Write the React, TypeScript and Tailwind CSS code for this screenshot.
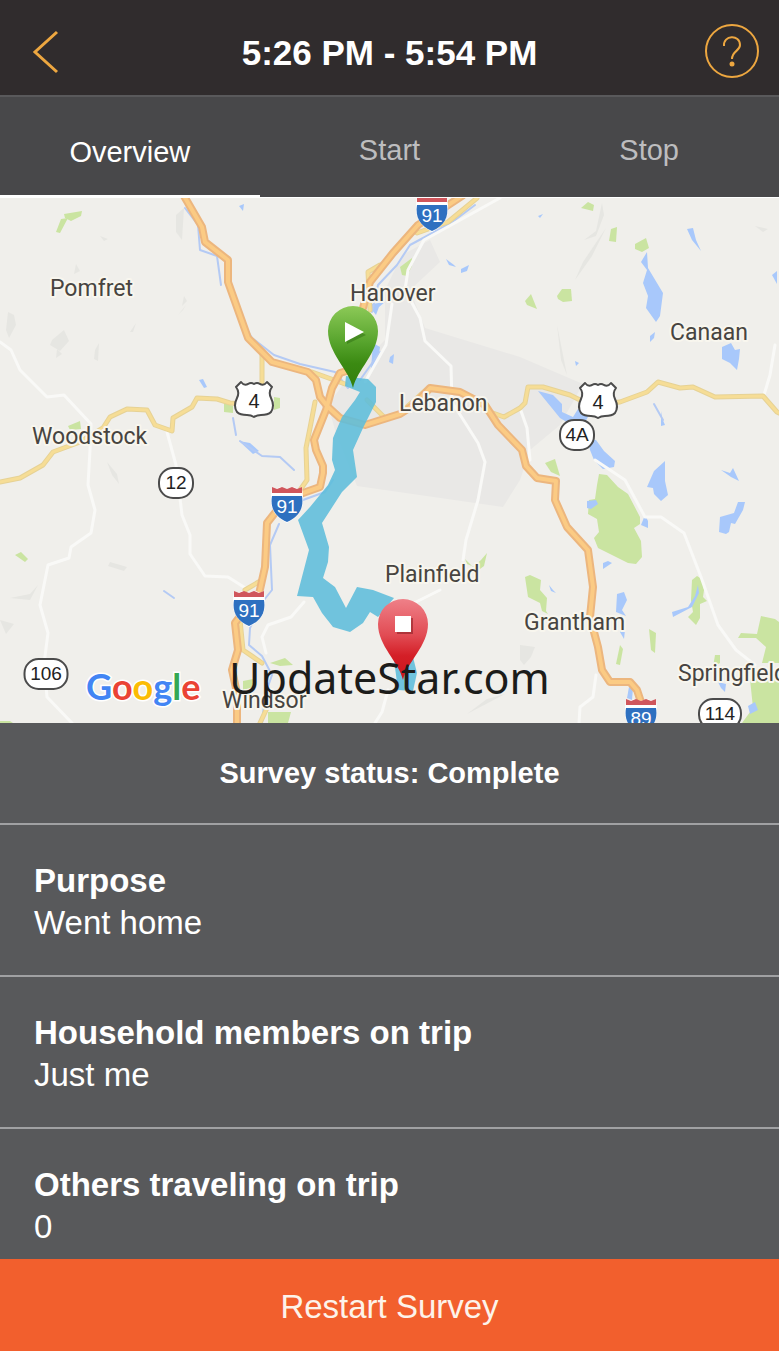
const tabs = ["Overview", "Start", "Stop"];

const answers = [
  { question: "Purpose", answer: "Went home" },
  { question: "Household members on trip", answer: "Just me" },
  { question: "Others traveling on trip", answer: "0" },
];

const parks = [
  "56,232 61,219 68,218 60,233",
  "64,214 82,211 81,216 71,221 65,218",
  "68,426 80,421 81,429 70,430",
  "15,555 21,552 28,559 25,562",
  "224,403 233,406 233,413 224,412",
  "400,267 412,258 412,266 407,276 402,275",
  "581,208 588,202 594,205 593,211",
  "611,229 617,227 616,242 609,241",
  "635,244 646,238 649,248 642,252 635,249",
  "557,296 562,289 571,289 572,301 563,302 558,299",
  "525,301 531,294 537,309 527,305",
  "545,463 555,459 560,476 551,472",
  "599,474 607,475 618,487 628,494 640,517 640,524 634,528 641,541 642,557 636,564 628,563 598,548 594,538 599,532 597,519 588,514 589,500 595,499 597,485",
  "525,577 530,575 541,580 540,590 547,598 546,611 548,614 542,611 540,603 528,597",
  "692,580 697,576 702,579 704,590 703,597 707,601 700,604 700,618 696,625 688,617 693,612 691,600",
  "649,629 656,633 655,653 651,650",
  "738,638 741,633 757,634 761,616 775,619 779,622 779,663 762,663 766,647 756,638",
  "750,679 779,670 779,723 742,723 753,708",
  "620,645 623,649 620,665 616,664",
  "715,655 720,655 720,663 713,667",
  "465,559 473,567 481,560 487,553 484,566 480,569 472,566 467,564",
  "270,663 285,658 293,665 280,666",
  "268,712 291,712 288,723 268,723",
  "0,721 10,721 13,723 0,723",
  "274,397 280,398 280,408 274,410",
  "243,681 253,679 253,687 243,690",
];

const lakes = [
  "647,252 648,268 663,293 660,316 656,322 646,308 648,296 643,283 647,270 641,262",
  "687,229 693,228 696,240 701,251 692,240",
  "650,336 655,332 654,338 650,342",
  "722,347 731,343 735,350 740,349 739,359 737,370 730,363 722,359",
  "772,275 777,271 777,284",
  "538,391 553,395 562,404 562,412 573,417 578,409 588,417 584,424 570,424 560,418",
  "588,439 596,440 604,451 615,461 614,467 603,469 594,460 590,450",
  "654,471 665,461 665,481 668,495 661,501 654,494 653,488 647,487",
  "721,470 730,473 733,468 739,481 731,477",
  "720,517 734,513 738,502 745,502 743,510 735,524 731,523 729,532 726,534 719,532",
  "641,525 645,515 648,521 648,528",
  "587,501 596,500 598,504 591,509 587,508",
  "617,594 624,592 627,600 622,610 626,616 616,612",
  "698,585 699,593 692,607 673,617 672,612 688,607 695,596",
  "621,625 625,630 624,639 620,632",
  "603,563 608,561 612,563 606,567 603,569",
  "549,585 553,590 556,593 551,591",
  "718,682 726,684 725,692 721,688",
  "748,706 755,702 758,710 750,714",
  "629,687 633,688 632,700 627,698",
  "446,259 454,265 456,267 449,265",
  "461,269 469,265 467,271 461,273",
  "390,357 394,354 393,364 389,362",
  "373,343 380,347 378,360 371,369",
  "372,304 385,302 379,307 376,315 372,310",
  "199,380 203,379 207,387 204,388",
  "239,441 250,443 259,451 253,454",
  "661,411 662,418 665,425 661,426",
  "575,361 579,363 576,366",
  "239,206 244,204 243,211",
  "538,216 543,214 540,218",
];

const terrain = [
  "176,215 184,208 182,240 176,232",
  "8,312 14,315 16,325 9,338 6,330",
  "52,340 64,330 69,341 60,351 50,345",
  "57,349 62,354 56,358",
  "130,332 136,323 133,332",
  "95,350 99,343 98,361 94,359",
  "602,203 604,215 596,236 584,240 596,231",
  "606,228 592,256 575,280 583,262",
  "557,325 561,345 567,375 561,360",
  "520,645 535,647 531,657 524,665 520,660",
  "107,462 117,474 119,484 112,475",
  "10,598 30,594 38,585 30,600",
  "755,226 768,229 763,232",
  "0,620 14,624 6,634",
  "110,562 127,567 124,571 108,566",
  "178,315 186,305 183,310",
  "467,714 487,699 505,694 486,704",
  "100,236 108,239 104,241",
  "76,264 80,271 74,274",
  "184,296 187,301 182,306",
];

const localRoads = [
  "M0,342 11,350 20,370 47,397 64,395 91,424 90,450 88,485 95,510 91,533 71,547 69,558 48,565 40,605 48,633 44,664 47,697 72,723",
  "M167,432 176,465 182,515 190,535 190,554 205,576 228,577 247,589",
  "M500,198 424,240 408,270 405,290 420,318 425,341 451,366 452,402 478,443 485,462 478,500 466,540 463,560",
  "M392,304 386,345 365,382",
  "M440,590 380,620",
  "M304,602 291,617 268,625 262,637 266,653",
  "M388,690 382,712 375,723",
  "M775,345 770,375 764,395",
  "M595,460 625,480 645,517 661,517 684,533 701,577 718,625 736,650 755,665",
  "M596,675 593,697 580,707 579,723",
  "M520,408 527,428 530,460",
];

const streams = [
  "M185,208 198,225 200,250 217,256 221,285",
  "M241,319 252,338 274,355 300,364 335,372 348,388",
  "M475,205 451,223 410,245 397,265 378,285 372,312",
  "M380,352 360,380",
  "M233,418 236,435",
  "M240,441 262,456 280,457 294,470",
  "M303,500 325,492 333,480",
  "M279,524 270,545 272,590 260,605 250,628 249,645 262,656 272,675 265,695 262,723",
  "M164,591 174,598",
  "M654,404 663,420",
];

const yellowRoads = [
  "M0,482 20,478 43,465 53,452 80,442 103,428 110,417 127,409 147,410 155,425 172,431 173,418 192,407 197,398 217,399 230,403 255,405 262,385 262,352",
  "M490,412 504,417 520,408 525,403 528,387 543,387 570,395 590,405 620,402 647,392 658,382 680,388 693,387 715,397 763,396 777,412 779,413",
  "M477,198 448,222 417,233",
  "M370,310 368,272 380,265",
  "M315,402 310,428 306,448 307,480 300,490",
  "M367,400 385,418",
  "M312,372 345,384",
  "M400,413 428,388",
  "M245,590 262,580",
  "M240,620 243,650 262,663",
  "M260,723 267,708",
];

const highways = [
  "M184,196 202,227 205,242 228,260 228,282 248,338 272,362 308,372 316,380 320,397 328,407 340,418 365,425 400,414 414,405 430,388 460,392 485,405 498,425 522,450 526,466 537,478 556,481 555,500 567,527 588,550 593,587 590,617 598,647 602,670 610,682 630,682 637,690 643,708",
  "M462,196 418,225 393,253 370,282 363,308",
  "M350,370 340,373 332,388 326,410 314,440 316,450 323,466 323,473 320,487 303,493 285,500 267,523 265,567 259,594 248,606 235,623 238,650 232,670 237,693 237,723",
];

const towns = [
  { name: "Pomfret", x: 50, y: 296 },
  { name: "Hanover", x: 350, y: 301 },
  { name: "Canaan", x: 670, y: 340 },
  { name: "Lebanon", x: 399, y: 411 },
  { name: "Woodstock", x: 32, y: 444 },
  { name: "Plainfield", x: 385, y: 582 },
  { name: "Grantham", x: 524, y: 630 },
  { name: "Springfield", x: 678, y: 681 },
  { name: "Windsor", x: 222, y: 708 },
];

const interstates = [
  { label: "91", x: 432, y: 205 },
  { label: "91", x: 287, y: 496 },
  { label: "91", x: 249, y: 600 },
  { label: "89", x: 641, y: 708 },
];

const usRoutes = [
  { label: "4", x: 254, y: 400 },
  { label: "4", x: 598, y: 401 },
];

const stateRoutes = [
  { label: "12", x: 176, y: 483, width: 34 },
  { label: "4A", x: 577, y: 435, width: 34 },
  { label: "106", x: 46, y: 674, width: 43 },
  { label: "114", x: 720, y: 714, width: 42 },
];

function TripMap() {
  return (
    <svg
      viewBox="0 198 779 525"
      role="img"
      aria-label="Trip route map"
      className="block w-full border-t border-white bg-[#f0efeb] font-['Roboto',sans-serif]"
    >
      <defs>
        <linearGradient id="startPin" x1="0" y1="0" x2="0" y2="1">
          <stop offset="0" stopColor="#8cc957" />
          <stop offset="0.45" stopColor="#56a32c" />
          <stop offset="0.7" stopColor="#3b8a12" />
          <stop offset="1" stopColor="#337f0c" />
        </linearGradient>
        <linearGradient id="stopPin" x1="0" y1="0" x2="0" y2="1">
          <stop offset="0" stopColor="#ef8088" />
          <stop offset="0.45" stopColor="#e14b53" />
          <stop offset="0.7" stopColor="#d41f27" />
          <stop offset="1" stopColor="#cb151c" />
        </linearGradient>
      </defs>

      <polygon
        points="425,328 520,357 583,384 560,425 530,450 520,480 503,507 357,486 335,430 328,405 350,375 385,340 385,290 402,255 430,240 440,262 410,290"
        fill="#e9e8e6"
      />
      {terrain.map((points) => <polygon key={points} points={points} fill="#e6e6e2" />)}
      {parks.map((points) => <polygon key={points} points={points} fill="#cae4a1" />)}
      {lakes.map((points) => <polygon key={points} points={points} fill="#a8c8fb" />)}

      <g fill="none" strokeLinejoin="round" strokeLinecap="round">
        {streams.map((d) => <path key={d} d={d} stroke="#b4caf4" strokeWidth="2" />)}
        {localRoads.map((d) => <path key={d} d={d} stroke="#f9f9f7" strokeWidth="3" />)}
        {yellowRoads.map((d) => <path key={d} d={d} stroke="#e6d295" strokeWidth="5" />)}
        {yellowRoads.map((d) => <path key={d} d={d} stroke="#f6dd96" strokeWidth="3" />)}
        {highways.map((d) => <path key={d} d={d} stroke="#ecb67e" strokeWidth="8" />)}
        {highways.map((d) => <path key={d} d={d} stroke="#fbcb84" strokeWidth="4" />)}
      </g>

      <g fill="#5dbddb" fillOpacity="0.88">
        <polygon points="346,376 358,378 368,379 376,387 376,402 363,428 353,450 357,477 342,492 322,523 329,547 328,562 323,578 335,587 346,608 357,587 373,590 394,598 378,617 370,612 363,623 350,632 333,627 322,613 313,597 297,596 309,550 298,520 310,507 328,485 335,470 332,460 333,438 342,417 355,400 360,392 345,386" />
        <polygon points="394,660 413,657 417,673 413,691 398,690" />
      </g>

      {interstates.map(({ label, x, y }) => (
        <g key={`${x}-${y}`} transform={`translate(${x} ${y})`}>
          <path
            d="M-15,-9 -11,-7 -7,-9 0,-7 7,-9 11,-7 15,-9 16,0 C17,12 13,20 0,27 C-13,20 -17,12 -16,0 Z"
            fill="#fff"
          />
          <path d="M-15,-9 -10,-7 -5,-9 0,-7 5,-9 10,-7 15,-9 15,-3 -15,-3 Z" fill="#d0565c" />
          <path d="M-15,0 H15 C17,12 12,21 0,26 C-12,21 -17,12 -15,0 Z" fill="#2e70c0" />
          <text y="17" textAnchor="middle" fill="#fff" className="text-[19px] font-['Liberation_Sans',sans-serif]">
            {label}
          </text>
        </g>
      ))}

      {usRoutes.map(({ label, x, y }) => (
        <g key={x} transform={`translate(${x} ${y})`}>
          <path
            d="M-13,-18 Q-10,-14 -6,-16 Q-3,-18 0,-16 Q3,-18 6,-16 Q10,-14 13,-18 L18,-13 Q14,-8 17,-2 Q21,6 17,12 Q14,15 7,15 Q3,15 0,17 Q-3,15 -7,15 Q-14,15 -17,12 Q-21,6 -17,-2 Q-14,-8 -18,-13 Z"
            fill="#fff"
            stroke="#4b4b4b"
            strokeWidth="2"
            strokeLinejoin="round"
          />
          <text y="8" textAnchor="middle" fill="#222" className="text-[20px] font-['Liberation_Sans',sans-serif]">
            {label}
          </text>
        </g>
      ))}

      {stateRoutes.map(({ label, x, y, width }) => (
        <g key={label} transform={`translate(${x} ${y})`}>
          <rect x={-width / 2} y="-15" width={width} height="30" rx="14" fill="#fff" stroke="#4b4b4b" strokeWidth="2" />
          <text y="6" textAnchor="middle" fill="#222" className="text-[19px] font-['Liberation_Sans',sans-serif]">
            {label}
          </text>
        </g>
      ))}

      <g fill="#474440" stroke="#f8f6ee" strokeWidth="4" strokeLinejoin="round" paintOrder="stroke" className="text-[23px]">
        {towns.map(({ name, x, y }) => <text key={name} x={x} y={y}>{name}</text>)}
      </g>

      <path d="M353,388 C349,370 328,353 328,331 A25,25 0 0 1 378,331 C378,353 357,370 353,388 Z" fill="url(#startPin)" />
      <path d="M347,325 366,335 347,344 Z" fill="#2e6d11" fillOpacity="0.5" />
      <path d="M345,322 364,332 345,342 Z" fill="#fff" />
      <path d="M403,680 C399,662 378,646 378,624 A25,25 0 0 1 428,624 C428,646 407,662 403,680 Z" fill="url(#stopPin)" />
      <rect x="397" y="618" width="16" height="16" fill="#8d2226" fillOpacity="0.6" />
      <rect x="395" y="616" width="16" height="16" fill="#fff" />

      <text
        x="86"
        y="700"
        stroke="#fff"
        strokeWidth="3"
        paintOrder="stroke"
        className="text-[36px] font-bold font-['Lato',sans-serif]"
      >
        <tspan fill="#4285f4">G</tspan>
        <tspan fill="#ea4335">o</tspan>
        <tspan fill="#fbbc05">o</tspan>
        <tspan fill="#4285f4">g</tspan>
        <tspan fill="#34a853">l</tspan>
        <tspan fill="#ea4335">e</tspan>
      </text>
      <text x="229" y="694" fill="#1c1c1a" className="text-[43px] font-['Noto_Sans',sans-serif]">UpdateStar.com</text>
    </svg>
  );
}

export default function App() {
  return (
    <div className="flex min-h-screen flex-col bg-[#58595b] font-['Liberation_Sans',Arial,sans-serif] text-white">
      <header className="flex items-center justify-between border-b-2 border-[#59595b] bg-[#302c2d] px-5 pt-6 pb-[17px] text-[#eda740]">
        <button type="button" aria-label="Back" className="flex size-[54px] items-center justify-center">
          <svg viewBox="0 0 54 54" fill="none" stroke="currentColor" strokeWidth="3" className="size-full">
            <path d="M37,8 15,28 37,48" />
          </svg>
        </button>
        <h1 className="pt-1 text-[35px] leading-10 font-bold text-white">5:26 PM - 5:54 PM</h1>
        <button type="button" aria-label="Help" className="size-[54px]">
          <svg viewBox="0 0 54 54" fill="none" stroke="currentColor" strokeWidth="2" className="size-full">
            <circle cx="27" cy="27" r="26" />
            <path d="M19,22 C18,11 35,10 35,21 C35,27 27,27 27,35" />
            <circle cx="27" cy="40" r="2.5" fill="currentColor" stroke="none" />
          </svg>
        </button>
      </header>

      <nav className="grid grid-cols-3 bg-[#48484a]">
        {tabs.map((tab, i) => (
          <button
            key={tab}
            type="button"
            className={
              i === 0
                ? "border-b-2 border-white pt-9 pb-6 text-[29px] leading-[38px]"
                : "border-b-2 border-[#48484a] pt-[34px] pb-[26px] text-[29px] leading-[38px] text-[#bdbdbf]"
            }
          >
            {tab}
          </button>
        ))}
      </nav>

      <TripMap />

      <main className="grow">
        <p className="border-b-2 border-[#a0a1a3] py-8 text-center text-[29px] leading-9 font-bold">
          Survey status: Complete
        </p>
        <dl className="divide-y-2 divide-[#a0a1a3]">
          {answers.map(({ question, answer }) => (
            <div key={question} className="px-[34px] pt-[35px] pb-[31px] text-[33px] leading-[42px] last:pb-2">
              <dt className="font-bold">{question}</dt>
              <dd>{answer}</dd>
            </div>
          ))}
        </dl>
      </main>

      <button type="button" className="bg-[#f25f2d] pt-[26px] pb-[22px] text-[33px] leading-[44px] text-[#fdf3ea]">
        Restart Survey
      </button>
    </div>
  );
}
